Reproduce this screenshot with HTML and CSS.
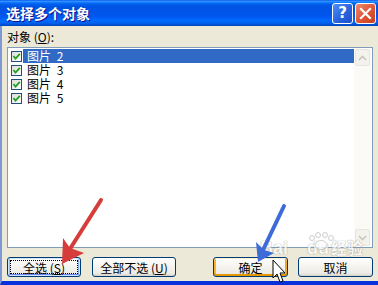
FILE: index.html
```html
<!DOCTYPE html>
<html>
<head>
  <title>选择多个对象</title>
  <link rel="stylesheet" href="styles.css">
</head>
<body>

<div class="window">
  <div class="titlebar">
    <span class="title">选择多个对象</span>
    <div class="title-buttons">
      <span class="tbtn help">?</span>
      <span class="tbtn close">
        <svg width="13" height="13" viewBox="0 0 13 13"><path d="M2 2 L11 11 M11 2 L2 11" stroke="#fff" stroke-width="2.2" stroke-linecap="square"/></svg>
      </span>
    </div>
  </div>

  <div class="client">
    <div class="label">对象 (<u>O</u>):</div>

    <div class="listbox">
      <div class="items">
        <div class="item"><span class="check"></span><span class="name selected">图片 2</span></div>
        <div class="item"><span class="check"></span><span class="name">图片 3</span></div>
        <div class="item"><span class="check"></span><span class="name">图片 4</span></div>
        <div class="item"><span class="check"></span><span class="name">图片 5</span></div>
      </div>
      <div class="scrollbar">
        <span class="sbtn">
          <svg width="9" height="6" viewBox="0 0 9 6"><path d="M1 5 L4.5 1.5 L8 5" fill="none" stroke="#c9c7ba" stroke-width="1.6"/></svg>
        </span>
        <span class="track"></span>
        <span class="sbtn">
          <svg width="9" height="6" viewBox="0 0 9 6"><path d="M1 1 L4.5 4.5 L8 1" fill="none" stroke="#c9c7ba" stroke-width="1.6"/></svg>
        </span>
      </div>
    </div>

    <div class="buttons">
      <div class="group">
        <button class="btn focus wide1">全选 (<u>S</u>)</button>
        <button class="btn wide2">全部不选 (<u>U</u>)</button>
      </div>
      <div class="group right">
        <button class="btn hover">确定</button>
        <button class="btn">取消</button>
      </div>
    </div>
  </div>

  <!-- watermark and annotation marks drawn over the dialog -->
  <div class="watermark">
    <span class="wm-main">Bai du<span class="wm-cn">经验</span></span>
  </div>

  <svg class="marks" width="378" height="285" viewBox="0 0 378 285">
    <g fill="#fff" stroke="#aaa" stroke-width="0.8" opacity="0.7">
      <circle cx="312" cy="238" r="2.5"/>
      <circle cx="318" cy="235" r="2.5"/>
      <circle cx="325" cy="235" r="2.5"/>
      <circle cx="331" cy="238" r="2.5"/>
      <ellipse cx="321" cy="245" rx="6" ry="4.5"/>
    </g>
    <path d="M101 200 L68 252" stroke="#d63c3a" stroke-width="4" stroke-linecap="round"/>
    <polygon points="62,264 63,238 70,248 84,253" fill="#d63c3a"/>
    <path d="M284 206 L263 250" stroke="#3f6bd8" stroke-width="4" stroke-linecap="round"/>
    <polygon points="258,262 256,242 264,250 274,253" fill="#3f6bd8"/>
    <path d="M273 260 L273 278 L277 274 L280 282 L283 281 L280 273 L285 273 Z" fill="#fff" stroke="#000" stroke-width="1"/>
  </svg>
</div>

</body>
</html>
```

FILE: styles.css
```css
body {
  margin: 0;
  font-family: "Noto Sans CJK SC", sans-serif;
  font-size: 12px;
  background-color: #ece9d8;
  overflow: hidden;
}

.window {
  position: relative;
  width: 378px;
  height: 285px;
  box-sizing: border-box;
  display: flex;
  flex-direction: column;
  background-color: #ece9d8;
  border-left: 2px solid #7f98d6;
  border-bottom: 4px solid #0831d9;
}

.titlebar {
  height: 28px;
  margin-left: -2px;
  display: flex;
  align-items: center;
  padding: 0 2px 0 6px;
  background: linear-gradient(to bottom, #0058ee 0%, #3a93ff 5%, #127dff 9%, #0262ee 15%, #0054e3 25%, #0055eb 56%, #005bf5 68%, #026afe 78%, #0062ef 88%, #0052d6 95%, #0041b0 100%);
}

.title {
  color: #fff;
  font-weight: bold;
  font-size: 14px;
  text-shadow: 1px 1px #0f1089;
}

.title-buttons {
  margin-left: auto;
  display: flex;
  gap: 2px;
}

.tbtn {
  width: 19px;
  height: 19px;
  border: 1px solid #fff;
  border-radius: 3px;
  display: flex;
  align-items: center;
  justify-content: center;
  color: #fff;
}

.help {
  background: linear-gradient(135deg, #4d8ff8 0%, #2a63df 55%, #1c4fc9 100%);
  font-family: "DejaVu Sans", sans-serif;
  font-weight: bold;
  font-size: 15px;
}

.close {
  background: linear-gradient(135deg, #f08a6c 0%, #e1583a 50%, #c83f1f 100%);
}

.client {
  flex: 1;
  display: flex;
  flex-direction: column;
  padding: 3px 5px 4px 5px;
}

.label {
  height: 16px;
  line-height: 16px;
  margin-bottom: 2px;
}

.listbox {
  height: 197px;
  border: 1px solid #7f9db9;
  background-color: #fff;
  padding: 1px 1px 1px 0;
  display: flex;
}

.items {
  flex: 1;
}

.item {
  height: 14px;
  display: flex;
  align-items: center;
}

.check {
  width: 9px;
  height: 9px;
  margin: 0 1px 0 3px;
  border: 1px solid #1c5180;
  background-image: url("data:image/svg+xml;utf8,<svg xmlns='http://www.w3.org/2000/svg' width='9' height='9'><path d='M1.5 4 L3.5 6.5 L7.8 1.8' fill='none' stroke='%2321a121' stroke-width='1.8'/></svg>"), linear-gradient(135deg, #dcdcd7, #fff);
}

.name {
  flex: 1;
  height: 14px;
  line-height: 14px;
  padding-left: 4px;
  word-spacing: 3px;
  white-space: pre;
}

.name.selected {
  background-color: #316ac5;
  color: #fff;
}

.scrollbar {
  width: 17px;
  display: flex;
  flex-direction: column;
  background-color: #fbfaf6;
}

.sbtn {
  height: 15px;
  margin: 0 1px;
  border: 1px solid #e8e6dc;
  border-radius: 2px;
  background-color: #f3f2ec;
  display: flex;
  align-items: center;
  justify-content: center;
}

.track {
  flex: 1;
}

.buttons {
  margin-top: 9px;
  display: flex;
}

.group {
  display: flex;
  gap: 11px;
}

.group.right {
  margin-left: auto;
  gap: 10px;
}

.btn {
  width: 75px;
  height: 20px;
  padding: 0;
  font-family: "Noto Sans CJK SC", sans-serif;
  font-size: 12px;
  color: #000;
  border: 1px solid #003c74;
  border-radius: 3px;
  background: linear-gradient(to bottom, #ffffff 0%, #f4f3ee 50%, #ecebe6 85%, #d6d0c5 100%);
}

.wide1 {
  width: 74px;
}

.wide2 {
  width: 84px;
}

.btn.focus {
  box-shadow: inset 0 0 0 1px #cee7ff, inset 0 -2px #6982ee, inset 2px 0 #98b8ea, inset -2px 0 #89ade4;
  outline: 1px dotted #000;
  outline-offset: -4px;
}

.btn.hover {
  box-shadow: inset 0 1px #fff0cf, inset 0 -2px #e59700, inset 2px 0 #f8b330, inset -2px 0 #f0a828;
}

.watermark {
  position: absolute;
  left: 258px;
  top: 238px;
  opacity: 0.7;
  pointer-events: none;
}

.wm-main {
  font-family: "Liberation Sans", sans-serif;
  font-weight: bold;
  font-size: 18px;
  line-height: 18px;
  color: #fff;
  word-spacing: 14px;
  text-shadow: 0 0 1px #888, 0 0 1px #888;
}

.wm-cn {
  font-family: "Noto Sans CJK SC", sans-serif;
  font-size: 16px;
  margin-left: 2px;
}

.marks {
  position: absolute;
  left: -2px;
  top: 0;
  pointer-events: none;
}
```
